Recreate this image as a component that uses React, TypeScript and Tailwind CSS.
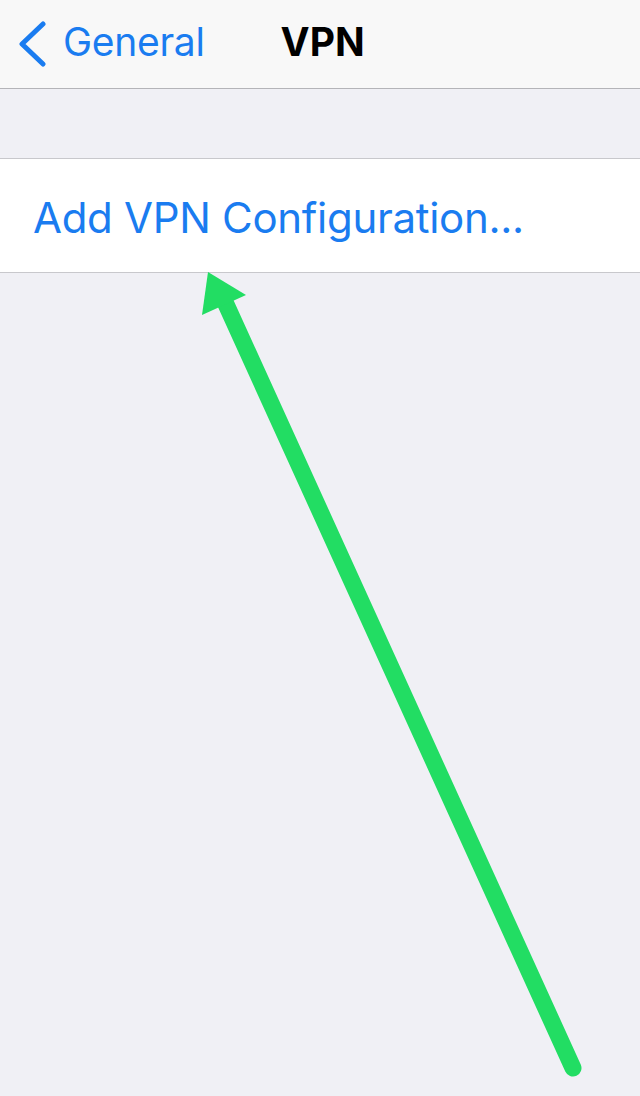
import React from 'react';

const font = { fontFamily: 'Inter, "Liberation Sans", Arial, sans-serif' };

export default function App() {
  return (
    <div className="relative w-[640px] h-[1096px] overflow-hidden bg-[#f0f0f5]" style={font}>
      {/* Navigation bar */}
      <div className="h-[89px] bg-[#f8f8f8] border-b border-[#b4b4b8] flex items-center pb-[5px]">
        <div className="flex items-center pl-[18px]">
          <svg width="32" height="48" viewBox="0 0 32 48" className="mt-[2px]">
            <path
              d="M25 5 L4 25 L25 45"
              fill="none"
              stroke="#1a7cf0"
              strokeWidth="5"
              strokeLinecap="round"
              strokeLinejoin="round"
            />
          </svg>
          <span className="ml-[13px] text-[39px] text-[#1a7cf0] tracking-[-0.3px] leading-none">General</span>
        </div>
        <span className="ml-[76px] text-[39px] font-bold text-black leading-none">VPN</span>
      </div>

      {/* Spacer section */}
      <div className="h-[70px] border-b border-[#c8c8cc]" />

      {/* Row */}
      <div className="h-[114px] bg-white border-b border-[#c8c8cc] flex items-center pl-[33px]">
        <span className="text-[42px] text-[#1a7cf0] tracking-[-0.3px] leading-none mt-[4px]">
          Add VPN Configuration...
        </span>
      </div>

      {/* Annotation arrow */}
      <svg className="absolute inset-0 pointer-events-none" width="640" height="1096" viewBox="0 0 640 1096">
        <line x1="225" y1="302" x2="573" y2="1068" stroke="#22dd63" strokeWidth="17" strokeLinecap="round" />
        <polygon points="208,272 246,295 202,315" fill="#22dd63" />
      </svg>
    </div>
  );
}
